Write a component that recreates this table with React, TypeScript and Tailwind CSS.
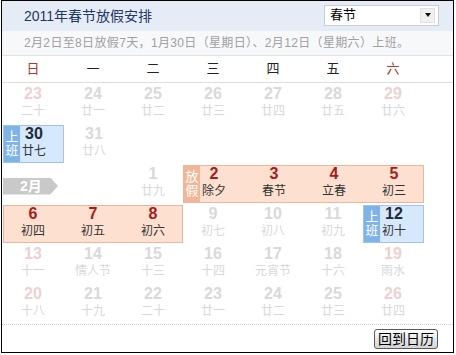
import React from 'react';

type Day = { n: number; lunar: string; tone: 'fade' | 'weekend' | 'holiday' | 'work' };
type Segment =
  | { kind: 'empty'; span: number }
  | { kind: 'tag'; span: number }
  | { kind: 'plain'; days: Day[] }
  | { kind: 'holiday' | 'work'; strip?: string; days: Day[] };

const f = (n: number, lunar: string): Day => ({ n, lunar, tone: 'fade' });
const w = (n: number, lunar: string): Day => ({ n, lunar, tone: 'weekend' });
const h = (n: number, lunar: string): Day => ({ n, lunar, tone: 'holiday' });
const k = (n: number, lunar: string): Day => ({ n, lunar, tone: 'work' });

const rows: Segment[][] = [
  [{ kind: 'plain', days: [w(23, '二十'), f(24, '廿一'), f(25, '廿二'), f(26, '廿三'), f(27, '廿四'), f(28, '廿五'), w(29, '廿六')] }],
  [
    { kind: 'work', strip: '上班', days: [k(30, '廿七')] },
    { kind: 'plain', days: [f(31, '廿八')] },
  ],
  [
    { kind: 'tag', span: 1 },
    { kind: 'empty', span: 1 },
    { kind: 'plain', days: [f(1, '廿九')] },
    { kind: 'holiday', strip: '放假', days: [h(2, '除夕'), h(3, '春节'), h(4, '立春'), h(5, '初三')] },
  ],
  [
    { kind: 'holiday', days: [h(6, '初四'), h(7, '初五'), h(8, '初六')] },
    { kind: 'plain', days: [f(9, '初七'), f(10, '初八'), f(11, '初九')] },
    { kind: 'work', strip: '上班', days: [k(12, '初十')] },
  ],
  [{ kind: 'plain', days: [w(13, '十一'), f(14, '情人节'), f(15, '十三'), f(16, '十四'), f(17, '元宵节'), f(18, '十六'), w(19, '雨水')] }],
  [{ kind: 'plain', days: [w(20, '十八'), f(21, '十九'), f(22, '二十'), f(23, '廿一'), f(24, '廿二'), f(25, '廿三'), w(26, '廿四')] }],
];

const weekdays = ['日', '一', '二', '三', '四', '五', '六'];
const cjk = { fontFamily: '"Liberation Sans", "Noto Sans CJK SC", sans-serif' };

function DayCell({ day }: { day: Day }) {
  const numColor =
    day.tone === 'holiday' ? 'text-[#a61c1c]' :
    day.tone === 'work' ? 'text-[#1e2a3a]' :
    day.tone === 'weekend' ? 'text-[#eed0d0]' : 'text-[#d9d9d9]';
  const lunarColor = day.tone === 'holiday' || day.tone === 'work' ? 'text-[#333]' : 'text-[#d8d8d8]';
  return (
    <div className="w-[60px] h-[38px] flex flex-col items-center">
      <span className={`text-[16px] leading-[18px] font-bold ${numColor}`}>{day.n}</span>
      <span className={`text-[12px] leading-[16px] ${lunarColor}`}>{day.lunar}</span>
    </div>
  );
}

function Strip({ text, work }: { text: string; work: boolean }) {
  return (
    <div
      className={`absolute left-0 top-0 bottom-0 w-[16px] flex flex-col items-center justify-center text-white text-[13px] leading-[14px] ${
        work ? 'bg-[#7db3e8]' : 'bg-[#f3b597]'
      }`}
    >
      {text.split('').map((c) => (
        <span key={c}>{c}</span>
      ))}
    </div>
  );
}

function Row({ segs }: { segs: Segment[] }) {
  return (
    <div className="h-[40px] flex items-center">
      {segs.map((s, i) => {
        if (s.kind === 'empty') return <div key={i} className="w-[60px]" />;
        if (s.kind === 'tag')
          return (
            <div key={i} className="w-[60px] h-[38px] flex items-center">
              <div className="mt-[4px] w-[55px] h-[17px] bg-[#c9c9c9] [clip-path:polygon(0_0,86%_0,100%_50%,86%_100%,0_100%)] flex items-center pl-[17px] text-white font-bold text-[14px]">
                2月
              </div>
            </div>
          );
        if (s.kind === 'plain')
          return s.days.map((d) => <DayCell key={`${i}-${d.n}`} day={d} />);
        const work = s.kind === 'work';
        return (
          <div
            key={i}
            className={`relative flex h-[38px] border ${
              work ? 'bg-[#d6e8fb] border-[#9fc4e8]' : 'bg-[#fde0cf] border-[#ebb69b]'
            }`}
          >
            {s.strip && <Strip text={s.strip} work={work} />}
            {s.days.map((d) => (
              <div key={d.n} className="-my-[1px] first:-ml-[1px] last:-mr-[1px]">
                <DayCell day={d} />
              </div>
            ))}
          </div>
        );
      })}
    </div>
  );
}

export default function App() {
  return (
    <div className="w-[456px] h-[355px] bg-white" style={cjk}>
      <div className="ml-[1px] w-[453px] h-[353px] border border-black flex flex-col">
        <div className="h-[30px] bg-[#e6ecf5] flex items-center justify-between pl-[22px] pr-[14px]">
          <span className="text-[14px] text-[#1d3766]">2011年春节放假安排</span>
          <div className="w-[115px] h-[21px] mb-[2px] bg-white border border-[#c7ced8] flex items-center justify-between pl-[5px] pr-[3px]">
            <span className="text-[13px] text-black">春节</span>
            <div className="w-[15px] h-[15px] bg-[#f0f0f0] border border-[#e0e0e0] flex items-center justify-center">
              <svg width="6" height="4" viewBox="0 0 6 4">
                <path d="M0 0h6L3 4z" fill="#111" />
              </svg>
            </div>
          </div>
        </div>
        <div className="h-[25px] bg-[#f7f8fa] border-b border-[#dfe2e6] flex items-center pl-[22px] text-[12px] tracking-[0.35px] text-[#a0a0a0]">
          2月2日至8日放假7天，1月30日（星期日）、2月12日（星期六）上班。
        </div>
        <div className="h-[27px] border-b border-[#dcdcdc] flex pl-[1px]">
          {weekdays.map((d, i) => (
            <div
              key={d}
              className={`w-[60px] flex items-center justify-center text-[13px] ${
                i === 0 || i === 6 ? 'text-[#a83a2c]' : 'text-[#222]'
              }`}
            >
              {d}
            </div>
          ))}
        </div>
        <div className="pt-[1px] pl-[1px] h-[241px]">
          {rows.map((r, i) => (
            <Row key={i} segs={r} />
          ))}
        </div>
        <div className="border-t border-dotted border-[#cfcfcf] flex-1 flex items-center justify-end pr-[15px]">
          <button className="h-[20px] w-[64px] rounded-[3px] border border-[#5b5b5b] bg-gradient-to-b from-white to-[#d4d4d8] text-[14px] text-black leading-none">
            回到日历
          </button>
        </div>
      </div>
    </div>
  );
}
